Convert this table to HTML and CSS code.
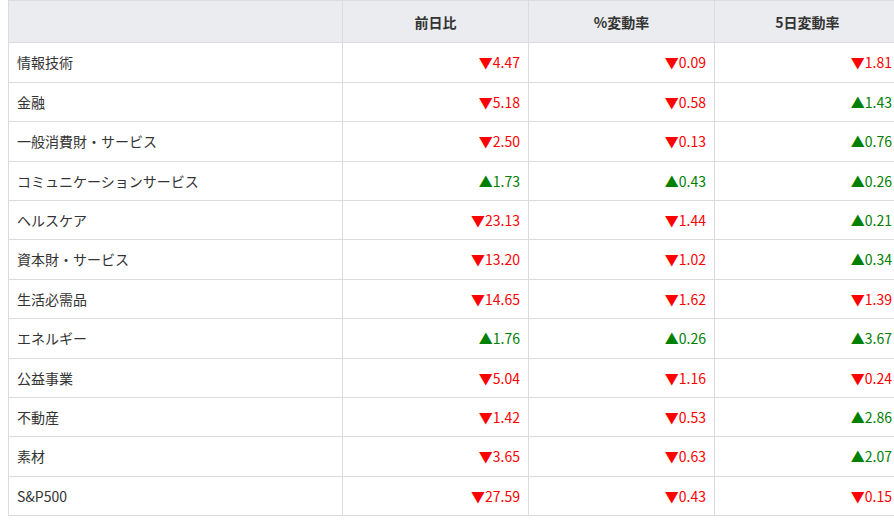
FILE: index.html
```html
<!DOCTYPE html>
<html lang="ja">
<head>
<meta charset="utf-8">
<link rel="stylesheet" href="styles.css">
</head>
<body>
<table class="sector">
  <colgroup>
    <col class="c-name"><col class="c-num"><col class="c-num"><col class="c-num">
  </colgroup>
  <thead>
    <tr><th></th><th>前日比</th><th>%変動率</th><th>5日変動率</th></tr>
  </thead>
  <tbody>
    <tr><td>情報技術</td><td class="dn">▼4.47</td><td class="dn">▼0.09</td><td class="dn">▼1.81</td></tr>
    <tr><td>金融</td><td class="dn">▼5.18</td><td class="dn">▼0.58</td><td class="up">▲1.43</td></tr>
    <tr><td>一般消費財・サービス</td><td class="dn">▼2.50</td><td class="dn">▼0.13</td><td class="up">▲0.76</td></tr>
    <tr><td>コミュニケーションサービス</td><td class="up">▲1.73</td><td class="up">▲0.43</td><td class="up">▲0.26</td></tr>
    <tr><td>ヘルスケア</td><td class="dn">▼23.13</td><td class="dn">▼1.44</td><td class="up">▲0.21</td></tr>
    <tr><td>資本財・サービス</td><td class="dn">▼13.20</td><td class="dn">▼1.02</td><td class="up">▲0.34</td></tr>
    <tr><td>生活必需品</td><td class="dn">▼14.65</td><td class="dn">▼1.62</td><td class="dn">▼1.39</td></tr>
    <tr><td>エネルギー</td><td class="up">▲1.76</td><td class="up">▲0.26</td><td class="up">▲3.67</td></tr>
    <tr><td>公益事業</td><td class="dn">▼5.04</td><td class="dn">▼1.16</td><td class="dn">▼0.24</td></tr>
    <tr><td>不動産</td><td class="dn">▼1.42</td><td class="dn">▼0.53</td><td class="up">▲2.86</td></tr>
    <tr><td>素材</td><td class="dn">▼3.65</td><td class="dn">▼0.63</td><td class="up">▲2.07</td></tr>
    <tr><td>S&amp;P500</td><td class="dn">▼27.59</td><td class="dn">▼0.43</td><td class="dn">▼0.15</td></tr>
  </tbody>
</table>
</body>
</html>
```
FILE: styles.css
```css
html, body {
  margin: 0;
  background: #fff;
}
body {
  padding: 0 0 0 8px;
  font-family: "Noto Sans CJK JP", "Noto Sans", sans-serif;
  font-size: 14px;
  line-height: 1.6;
  color: #333;
}
.sector {
  border-collapse: collapse;
  table-layout: fixed;
  width: 893px;
}
.c-name { width: 334px; }
.c-num { width: 186px; }
.sector th, .sector td {
  border: 1px solid #dcdcdc;
  padding: 8px 8px;
}
.sector th {
  background: #ebecef;
  font-weight: bold;
  text-align: center;
  padding: 9.5px 8px;
  color: #333;
}
.sector td:not(:first-child) {
  text-align: right;
}
.dn { color: #ff0000; }
.up { color: #008000; }
```
